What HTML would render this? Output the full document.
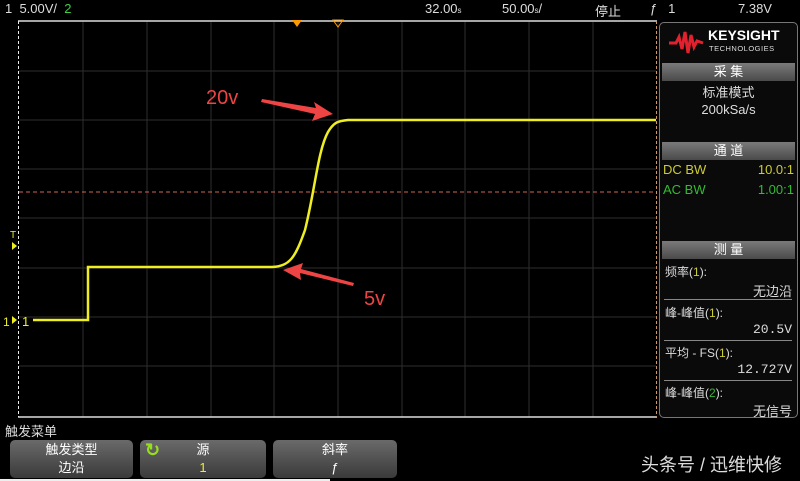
<!DOCTYPE html>
<html><head><meta charset="utf-8"><style>
*{margin:0;padding:0;box-sizing:border-box}
body{width:800px;height:481px;background:#000;overflow:hidden;position:relative;font-family:"Liberation Sans","Noto Sans CJK SC",sans-serif;color:#ddd}
.a{position:absolute;white-space:nowrap}
.panel{position:absolute;left:659px;top:22px;width:139px;height:396px;border:1px solid #777;border-radius:5px;background:#0a0a0a}
.hdr{position:absolute;left:2px;width:133px;height:18px;background:linear-gradient(#7a7a7a,#4a4a4a);color:#fff;font-size:13px;text-align:center;line-height:18px}
.sep{position:absolute;left:4px;width:128px;height:1px;background:#888}
.btn{position:absolute;top:440px;height:38px;border-radius:5px;background:linear-gradient(#6a6a6a,#3a3a3a);color:#fff;font-size:13px;text-align:center;line-height:18px;padding-top:1px}
</style></head><body>
<div class="a" style="left:5px;top:1px;font-size:13px;color:#ddd">1&nbsp;&nbsp;5.00V/&nbsp;&nbsp;<span style="color:#4c4">2</span></div>
<div class="a" style="left:425px;top:1px;font-size:13px">32.00<span style="font-size:8px">s</span></div>
<div class="a" style="left:502px;top:1px;font-size:13px">50.00<span style="font-size:8px">s</span>/</div>
<div class="a" style="left:595px;top:1px;font-size:13px">停止</div>
<div class="a" style="left:650px;top:1px;font-size:13px">ƒ&nbsp;&nbsp;&nbsp;1</div>
<div class="a" style="left:738px;top:1px;font-size:13px">7.38V</div>
<svg class="a" style="left:0;top:0" width="660" height="420">
<g stroke="#2e2e2e" stroke-width="1">
<line x1="83" y1="22" x2="83" y2="417"/><line x1="147" y1="22" x2="147" y2="417"/><line x1="211" y1="22" x2="211" y2="417"/><line x1="274" y1="22" x2="274" y2="417"/><line x1="338" y1="22" x2="338" y2="417"/><line x1="402" y1="22" x2="402" y2="417"/><line x1="465" y1="22" x2="465" y2="417"/><line x1="529" y1="22" x2="529" y2="417"/><line x1="593" y1="22" x2="593" y2="417"/>
<line x1="19" y1="71" x2="656" y2="71"/><line x1="19" y1="120" x2="656" y2="120"/><line x1="19" y1="169" x2="656" y2="169"/><line x1="19" y1="218" x2="656" y2="218"/><line x1="19" y1="268" x2="656" y2="268"/><line x1="19" y1="317" x2="656" y2="317"/><line x1="19" y1="366" x2="656" y2="366"/>
</g>
<line x1="18" y1="21" x2="657" y2="21" stroke="#ddd" stroke-width="1.5"/>
<line x1="18" y1="417" x2="657" y2="417" stroke="#ddd" stroke-width="1.5"/>
<line x1="18.5" y1="21" x2="18.5" y2="417" stroke="#eee" stroke-dasharray="3,2"/>
<line x1="656.5" y1="21" x2="656.5" y2="417" stroke="#c96" stroke-dasharray="3,2"/>
<line x1="19" y1="192" x2="656" y2="192" stroke="#c65" stroke-dasharray="4,3"/>
<path d="M292 20 L302 20 L297 27Z" fill="#f90"/>
<path d="M333 20 L343 20 L338 27Z" fill="none" stroke="#f90"/>
<path d="M33 320 L88 320 L88 267 L272 267 C290 266 295 258 305 230 C315 190 318 150 328 132 C334 122 338 121 348 120 L656 120" fill="none" stroke="#ee2" stroke-width="2.5"/>
<text x="10" y="238" fill="#ee2" font-size="10" font-family="Liberation Sans">T</text>
<path d="M12 242 L17 246 L12 250Z" fill="#ee2"/>
<text x="3" y="326" fill="#ee2" font-size="12" font-family="Liberation Sans">1</text>
<path d="M12 316 L17 320 L12 324Z" fill="#ee2"/>
<text x="22" y="326" fill="#ee2" font-size="13" font-family="Liberation Sans">1</text>
<text x="206" y="104" fill="#e44" font-size="20" font-family="Liberation Sans">20v</text>
<text x="364" y="305" fill="#e44" font-size="20" font-family="Liberation Sans">5v</text>
<path d="M262 99 L316 108 L314 102 L333 114 L312 121 L315 114 L261 102 Z" fill="#e44"/>
<path d="M353 286 L300 273 L301 280 L283 270 L303 263 L301 269 L354 283 Z" fill="#e44"/>
</svg>
<div class="panel">
<svg class="a" style="left:8px;top:6px" width="36" height="26"><path d="M1 14 L8 14 L11 8 L14 20 L17 3 L20 24 L23 6 L26 18 L29 12 L35 14" fill="none" stroke="#e1222e" stroke-width="3"/></svg>
<div class="a" style="left:48px;top:4px;font-size:14px;font-weight:bold;color:#fff">KEYSIGHT</div>
<div class="a" style="left:49px;top:21px;font-size:7.5px;color:#ddd;letter-spacing:.5px">TECHNOLOGIES</div>
<div class="hdr" style="top:40px">采 集</div>
<div class="a" style="left:0;width:137px;text-align:center;top:59px;font-size:13px">标准模式</div>
<div class="a" style="left:0;width:137px;text-align:center;top:79px;font-size:13px">200kSa/s</div>
<div class="hdr" style="top:119px">通 道</div>
<div class="a" style="left:3px;top:139px;font-size:13px;color:#cc3">DC BW</div>
<div class="a" style="right:3px;top:139px;font-size:13px;color:#cc3">10.0:1</div>
<div class="a" style="left:3px;top:159px;font-size:13px;color:#3b3">AC BW</div>
<div class="a" style="right:3px;top:159px;font-size:13px;color:#3b3">1.00:1</div>
<div class="hdr" style="top:218px">测 量</div>
<div class="a" style="left:5px;top:240px;font-size:12px">频率(<span style="color:#cc3">1</span>):</div>
<div class="a" style="right:5px;top:258px;font-size:13px">无边沿</div>
<div class="sep" style="top:276px"></div>
<div class="a" style="left:5px;top:281px;font-size:12px">峰-峰值(<span style="color:#cc3">1</span>):</div>
<div class="a" style="right:5px;top:299px;font-size:13px;font-family:'Liberation Mono',monospace">20.5V</div>
<div class="sep" style="top:317px"></div>
<div class="a" style="left:5px;top:321px;font-size:12px">平均 - FS(<span style="color:#cc3">1</span>):</div>
<div class="a" style="right:5px;top:339px;font-size:13px;font-family:'Liberation Mono',monospace">12.727V</div>
<div class="sep" style="top:357px"></div>
<div class="a" style="left:5px;top:361px;font-size:12px">峰-峰值(<span style="color:#3b3">2</span>):</div>
<div class="a" style="right:5px;top:378px;font-size:13px">无信号</div>
</div>
<div class="a" style="left:5px;top:421px;font-size:13px;color:#ddd">触发菜单</div>
<div class="btn" style="left:10px;width:123px">触发类型<br>边沿</div>
<div class="btn" style="left:140px;width:126px"><span style="position:absolute;left:5px;top:1px;color:#9d2;font-size:18px;font-weight:bold">↻</span>源<br><span style="color:#ee2">1</span></div>
<div class="btn" style="left:273px;width:124px">斜率<br>ƒ</div>
<div class="a" style="left:641px;top:451px;font-size:18px;color:#ddd">头条号 / 迅维快修</div>
<div class="a" style="left:0;top:479px;width:330px;height:2px;background:#eee"></div>
</body></html>
